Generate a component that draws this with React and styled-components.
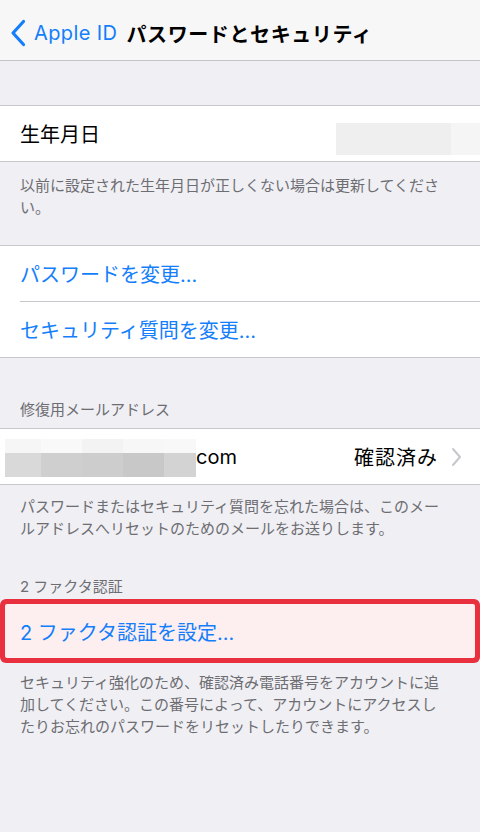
import React from "react";
import styled, { createGlobalStyle } from "styled-components";

const GlobalStyle = createGlobalStyle`
  html, body { margin: 0; padding: 0; background: #efeff4; }
  body { font-family: "Inter", "Noto Sans CJK JP", "Noto Sans", sans-serif; -webkit-font-smoothing: antialiased; }
  * { box-sizing: border-box; }
`;

const Page = styled.div`
  width: 480px;
  min-height: 832px;
  background: #efeff4;
  display: flex;
  flex-direction: column;
`;

const NavBar = styled.div`
  height: 61px;
  padding-top: 6px;
  background: #f7f7f7;
  border-bottom: 1px solid #c4c4c8;
  display: flex;
  align-items: center;
`;

const BackButton = styled.div`
  display: flex;
  align-items: center;
  padding-left: 10px;
  color: #147efb;
  font-size: 20px;
  letter-spacing: 0.4px;
  gap: 8px;
`;

const NavTitle = styled.div`
  margin-left: 9px;
  font-family: "Noto Sans CJK JP", sans-serif;
  font-weight: 700;
  font-size: 20px;
  letter-spacing: 0.6px;
  color: #000;
`;

const Spacer = styled.div`
  height: ${(p) => p.h}px;
`;

const Group = styled.div`
  background: #fff;
  border-top: 1px solid #c8c7cc;
  border-bottom: 1px solid #c8c7cc;
`;

const Cell = styled.div`
  height: 55px;
  display: flex;
  align-items: center;
  padding-left: ${(p) => (p.pl != null ? p.pl : 20)}px;
  padding-right: 18px;
  font-size: 20px;
  color: ${(p) => (p.link ? "#147efb" : "#000")};
  position: relative;
`;

const SepCell = styled(Cell)`
  & + &::after {
    content: "";
    position: absolute;
    left: 20px;
    right: 0;
    top: -1px;
    height: 1px;
    background: #c8c7cc;
  }
  & + & { margin-top: 1px; }
`;

const HighlightCell = styled.div`
  height: 54px;
  margin: 0 5px;
  display: flex;
  align-items: center;
  padding-left: 15px;
  font-size: 20px;
  color: #147efb;
  background: #fdeff0;
  border-radius: 2px;
  box-shadow: 0 0 0 5px #e8303f;
`;

const Label = styled.span`
  flex: 1;
`;

const BlurBox = styled.div`
  align-self: flex-end;
  margin-bottom: 6px;
  margin-right: -18px;
  height: 32px;
  width: 144px;
  display: flex;
`;

const BlurPart = styled.div`
  width: ${(p) => p.w}px;
  background: ${(p) => p.c};
`;

const Pixelated = styled.div`
  display: grid;
  grid-template-columns: 36px 41px 41px 41px 32px;
  grid-template-rows: 14px 24px;
  margin-top: 2px;
`;

const Pixel = styled.div`
  background: ${(p) => p.c};
`;

const Detail = styled.span`
  color: #000;
  font-size: 20px;
  letter-spacing: 1px;
  margin-right: 13px;
`;

const Footer = styled.div`
  padding: ${(p) => p.pt}px 20px ${(p) => p.pb}px;
  font-family: "Noto Sans CJK JP", sans-serif;
  font-size: 15px;
  line-height: 22px;
  color: #6d6d72;
  white-space: nowrap;
`;

const Header = styled.div`
  padding: ${(p) => p.pt}px 20px ${(p) => p.pb}px;
  font-size: 15px;
  line-height: 22px;
  color: #6d6d72;
`;

const Chevron = () => (
  <svg width="11" height="20" viewBox="0 0 11 20" fill="none">
    <path d="M2 2 L9 10 L2 18" stroke="#c7c7cc" strokeWidth="2" strokeLinecap="round" strokeLinejoin="round" />
  </svg>
);

const BackChevron = () => (
  <svg width="16" height="28" viewBox="0 0 16 28" fill="none">
    <path d="M13.5 2.5 L3 14 L13.5 25.5" stroke="#147efb" strokeWidth="3.2" strokeLinecap="round" strokeLinejoin="round" />
  </svg>
);

const Lines = ({ lines }) =>
  lines.map((l, i) => (
    <React.Fragment key={i}>
      {l}
      {i < lines.length - 1 && <br />}
    </React.Fragment>
  ));

const topRow = ["#f6f6f6", "#f9f9f9", "#f3f3f3", "#f7f7f7", "#f8f8f8"];
const bottomRow = ["#d9d9d9", "#cfcfcf", "#cdcdcd", "#c8c8c8", "#d3d3d3"];

export default function App() {
  return (
    <Page>
      <GlobalStyle />
      <NavBar>
        <BackButton>
          <BackChevron />
          <span>Apple ID</span>
        </BackButton>
        <NavTitle>パスワードとセキュリティ</NavTitle>
      </NavBar>
      <Spacer h={44} />
      <Group>
        <Cell>
          <Label>生年月日</Label>
          <BlurBox>
            <BlurPart w={115} c="#efefef" />
            <BlurPart w={29} c="#f5f5f5" />
          </BlurBox>
        </Cell>
      </Group>
      <Footer pt={12} pb={27}>
        <Lines lines={["以前に設定された生年月日が正しくない場合は更新してくださ", "い。"]} />
      </Footer>
      <Group>
        <SepCell link>パスワードを変更...</SepCell>
        <SepCell link>セキュリティ質問を変更...</SepCell>
      </Group>
      <Header pt={41} pb={7}>修復用メールアドレス</Header>
      <Group>
        <Cell pl={5}>
          <Pixelated>
            {topRow.map((c, i) => (
              <Pixel key={"t" + i} c={c} />
            ))}
            {bottomRow.map((c, i) => (
              <Pixel key={"b" + i} c={c} />
            ))}
          </Pixelated>
          <Label>com</Label>
          <Detail>確認済み</Detail>
          <Chevron />
        </Cell>
      </Group>
      <Footer pt={10} pb={37}>
        <Lines
          lines={[
            "パスワードまたはセキュリティ質問を忘れた場合は、このメー",
            "ルアドレスへリセットのためのメールをお送りします。",
          ]}
        />
      </Footer>
      <Header pt={0} pb={6}>2 ファクタ認証</Header>
      <HighlightCell>2 ファクタ認証を設定...</HighlightCell>
      <Footer pt={13} pb={20}>
        <Lines
          lines={[
            "セキュリティ強化のため、確認済み電話番号をアカウントに追",
            "加してください。この番号によって、アカウントにアクセスし",
            "たりお忘れのパスワードをリセットしたりできます。",
          ]}
        />
      </Footer>
    </Page>
  );
}
